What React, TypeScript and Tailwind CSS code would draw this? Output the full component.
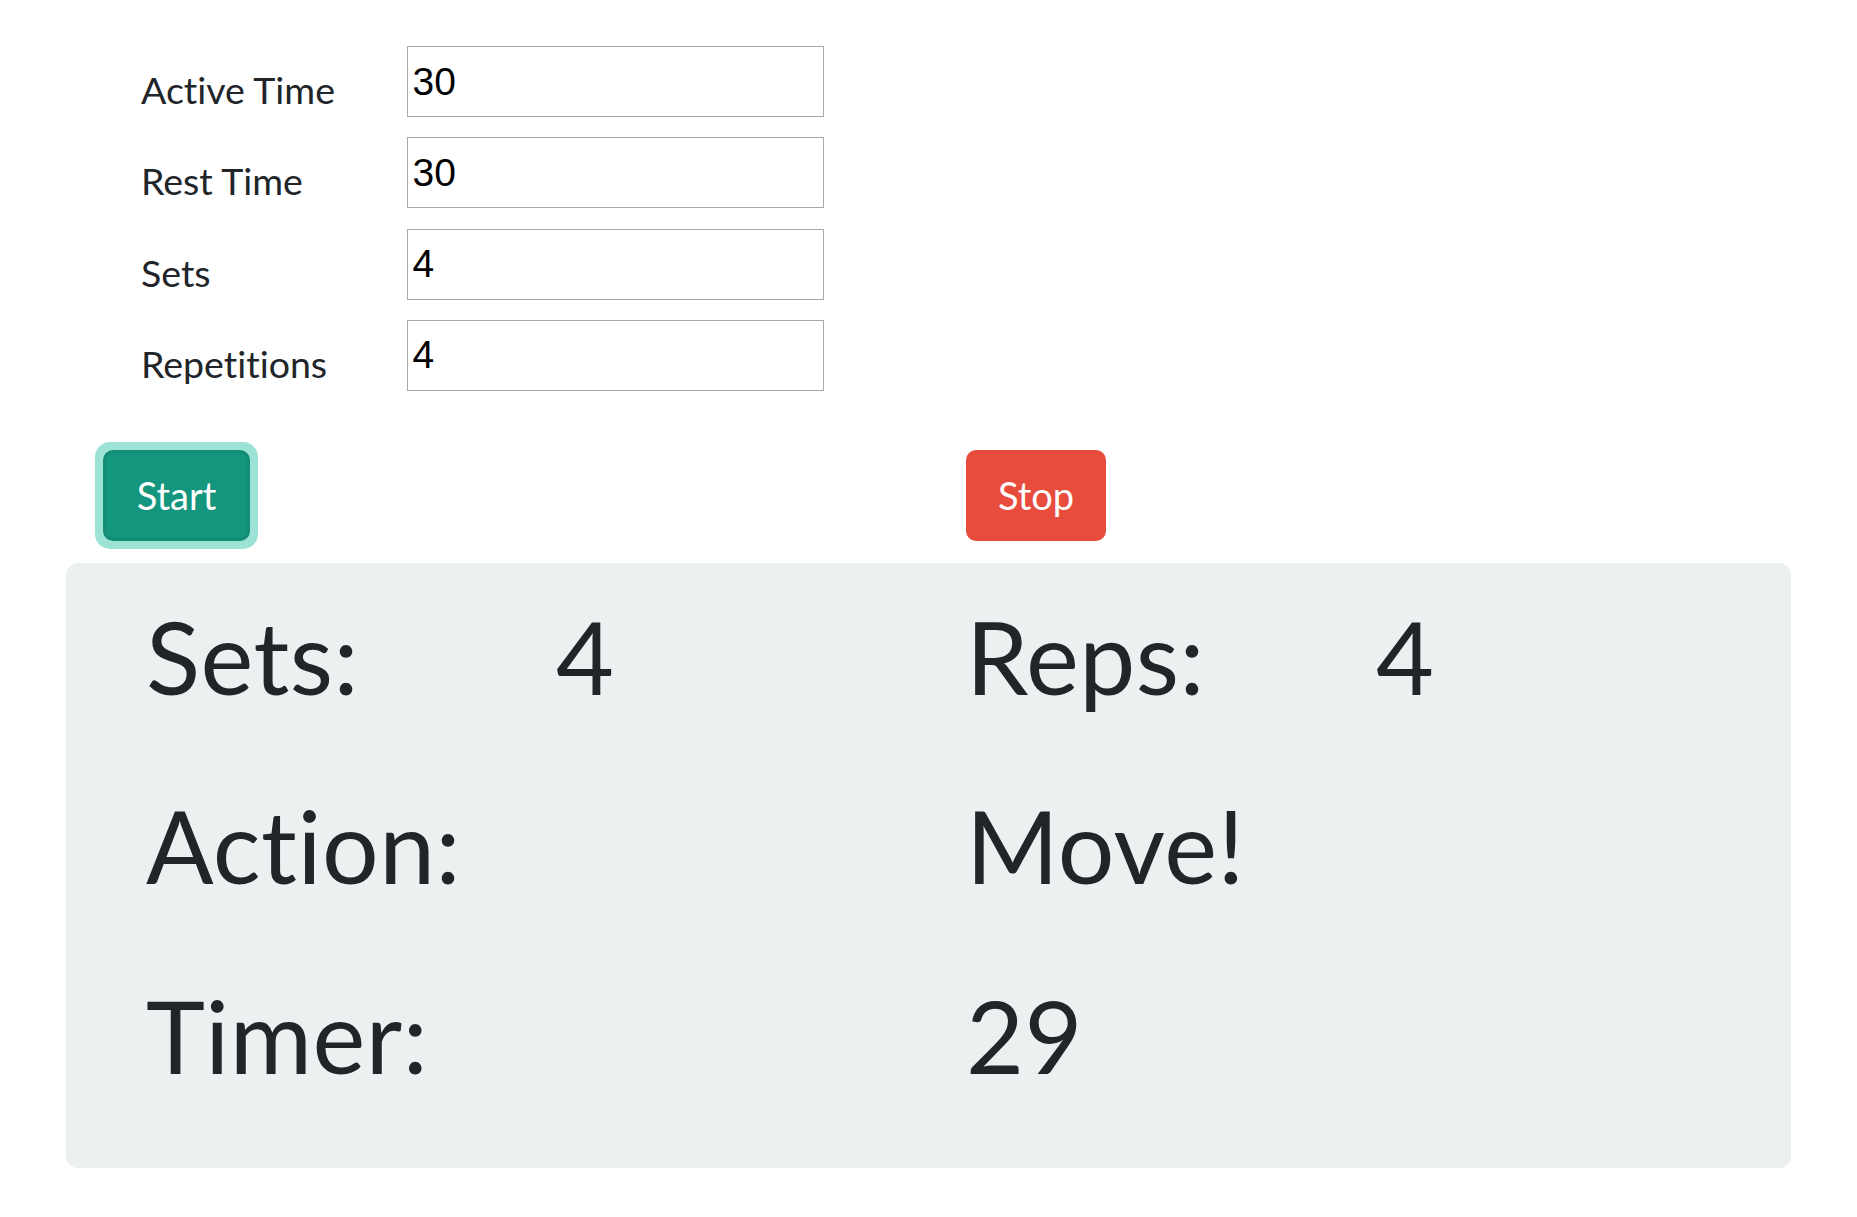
import React from 'react';

const fields = [
  { label: 'Active Time', value: '30' },
  { label: 'Rest Time', value: '30' },
  { label: 'Sets', value: '4' },
  { label: 'Repetitions', value: '4' },
];

function Stat({ label, value }: { label: string; value: string }) {
  return (
    <div className="flex w-[820px]">
      <div className="w-[410px]">{label}</div>
      <div className="w-[410px]">{value}</div>
    </div>
  );
}

export default function App() {
  return (
    <div className="min-h-screen bg-white font-['Lato','Noto_Sans',sans-serif] text-[#212529] [font-variant-ligatures:none]">
      <div className="pl-[141px] pt-[46px] flex flex-col gap-[20.3px]">
        {fields.map((f) => (
          <div key={f.label} className="flex h-[71px]">
            <label className="w-[265.5px] pt-[16px] text-[37.5px] leading-[1.5]">{f.label}</label>
            <input
              type="text"
              defaultValue={f.value}
              className="w-[417px] h-[71px] border border-[#a9a9a9] bg-white pl-[5px] text-black font-['Liberation_Sans',Arial,sans-serif] text-[39px] outline-none"
            />
          </div>
        ))}
      </div>

      <div className="flex pl-[95px] mt-[51px] h-[107px] items-start">
        <div className="w-[871px]">
          <div className="w-[163px] h-[107px] rounded-[15px] bg-[#9de3d5] p-[8px]">
            <button className="w-full h-full rounded-[10px] bg-[#13967d] border-[3px] border-[#128c74] text-white text-[38px] flex items-center justify-center">
              Start
            </button>
          </div>
        </div>
        <button className="mt-[8px] w-[140px] h-[91px] rounded-[10px] bg-[#e74c3c] text-white text-[38px] flex items-center justify-center">
          Stop
        </button>
      </div>

      <div className="ml-[66px] mt-[14px] w-[1725px] h-[605px] rounded-[12px] bg-[#ecf0f1] pl-[80px] pt-[33px] text-[100px] leading-[1.2] tracking-[0.5px]">
        <div className="flex h-[189.5px]">
          <Stat label="Sets:" value="4" />
          <Stat label="Reps:" value="4" />
        </div>
        <div className="flex h-[189.5px]">
          <div className="w-[820px]">Action:</div>
          <div>Move!</div>
        </div>
        <div className="flex h-[189.5px]">
          <div className="w-[820px]">Timer:</div>
          <div>29</div>
        </div>
      </div>
    </div>
  );
}
